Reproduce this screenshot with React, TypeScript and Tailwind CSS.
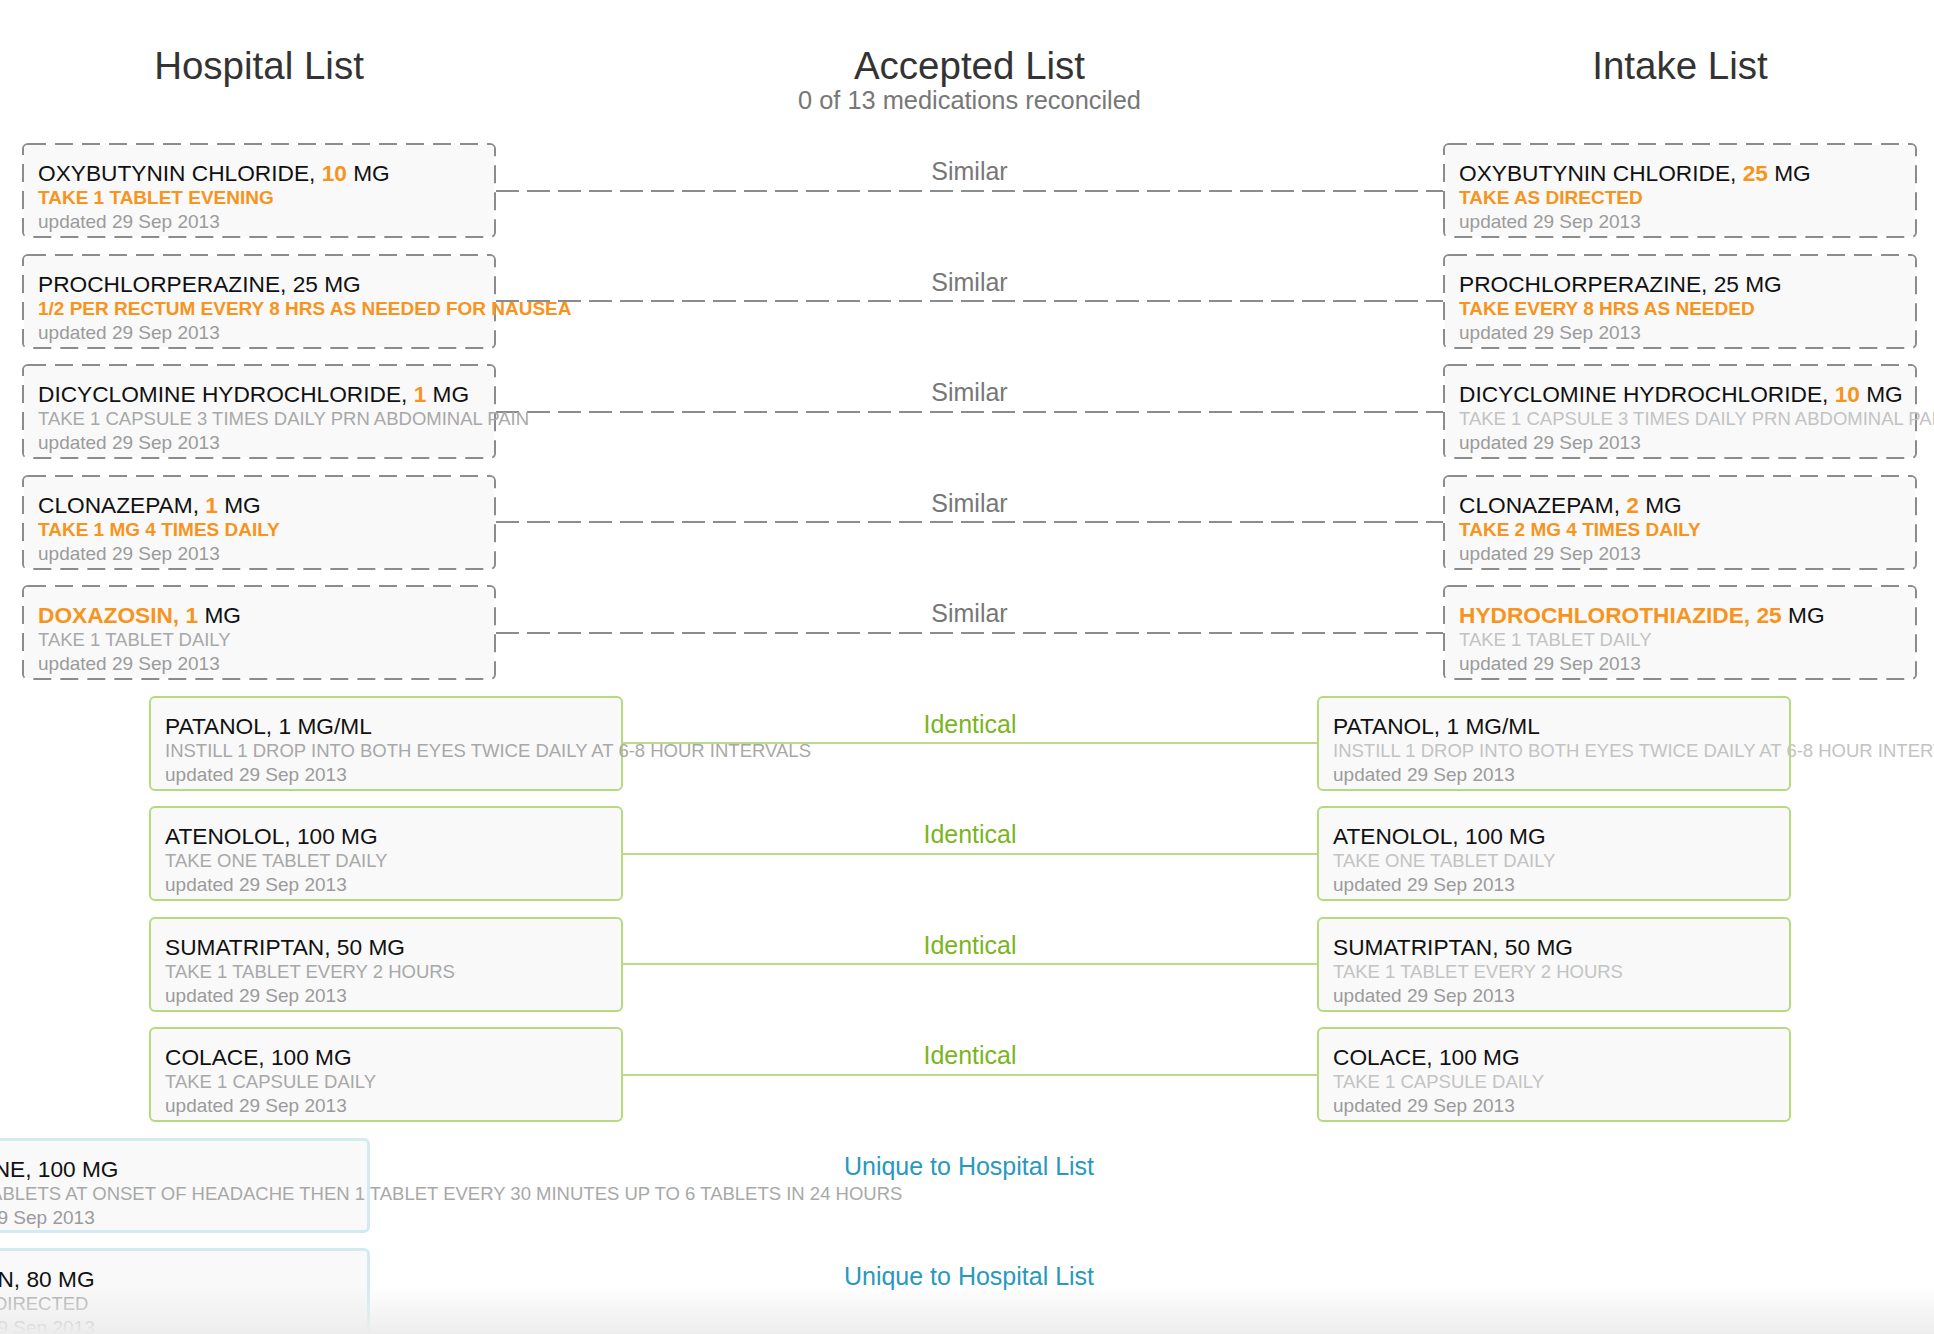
import React from "react";

type Seg = { t: string; hl?: boolean };
type Med = { name: Seg[]; instr: string; instrHl?: boolean };

type Kind = "similar" | "identical" | "unique";

const similarRows: { h: Med; i: Med }[] = [
  {
    h: { name: [{ t: "OXYBUTYNIN CHLORIDE, " }, { t: "10", hl: true }, { t: " MG" }], instr: "TAKE 1 TABLET EVENING", instrHl: true },
    i: { name: [{ t: "OXYBUTYNIN CHLORIDE, " }, { t: "25", hl: true }, { t: " MG" }], instr: "TAKE AS DIRECTED", instrHl: true },
  },
  {
    h: { name: [{ t: "PROCHLORPERAZINE, 25 MG" }], instr: "1/2 PER RECTUM EVERY 8 HRS AS NEEDED FOR NAUSEA", instrHl: true },
    i: { name: [{ t: "PROCHLORPERAZINE, 25 MG" }], instr: "TAKE EVERY 8 HRS AS NEEDED", instrHl: true },
  },
  {
    h: { name: [{ t: "DICYCLOMINE HYDROCHLORIDE, " }, { t: "1", hl: true }, { t: " MG" }], instr: "TAKE 1 CAPSULE 3 TIMES DAILY PRN ABDOMINAL PAIN" },
    i: { name: [{ t: "DICYCLOMINE HYDROCHLORIDE, " }, { t: "10", hl: true }, { t: " MG" }], instr: "TAKE 1 CAPSULE 3 TIMES DAILY PRN ABDOMINAL PAIN" },
  },
  {
    h: { name: [{ t: "CLONAZEPAM, " }, { t: "1", hl: true }, { t: " MG" }], instr: "TAKE 1 MG 4 TIMES DAILY", instrHl: true },
    i: { name: [{ t: "CLONAZEPAM, " }, { t: "2", hl: true }, { t: " MG" }], instr: "TAKE 2 MG 4 TIMES DAILY", instrHl: true },
  },
  {
    h: { name: [{ t: "DOXAZOSIN, 1", hl: true }, { t: " MG" }], instr: "TAKE 1 TABLET DAILY" },
    i: { name: [{ t: "HYDROCHLOROTHIAZIDE, 25", hl: true }, { t: " MG" }], instr: "TAKE 1 TABLET DAILY" },
  },
];

const identicalRows: Med[] = [
  { name: [{ t: "PATANOL, 1 MG/ML" }], instr: "INSTILL 1 DROP INTO BOTH EYES TWICE DAILY AT 6-8 HOUR INTERVALS" },
  { name: [{ t: "ATENOLOL, 100 MG" }], instr: "TAKE ONE TABLET DAILY" },
  { name: [{ t: "SUMATRIPTAN, 50 MG" }], instr: "TAKE 1 TABLET EVERY 2 HOURS" },
  { name: [{ t: "COLACE, 100 MG" }], instr: "TAKE 1 CAPSULE DAILY" },
];

const uniqueRows: Med[] = [
  {
    name: [{ t: "CAFFEINE, 100 MG" }],
    instr: "TAKE 2 TABLETS AT ONSET OF HEADACHE THEN 1 TABLET EVERY 30 MINUTES UP TO 6 TABLETS IN 24 HOURS",
  },
  { name: [{ t: "GEODON, 80 MG" }], instr: "TAKE AS DIRECTED" },
];

function Card({ med, kind, side }: { med: Med; kind: Kind; side: "left" | "right" }) {
  const border =
    kind === "similar"
      ? "border-2 border-transparent bg-clip-padding"
      : kind === "identical"
      ? "border-2 border-[#b7da80]"
      : "border-[3px] border-[#d4eaf1]";
  const instrColor = med.instrHl
    ? "font-bold text-[19px] text-[#f7941e]"
    : side === "left"
    ? "text-[18.5px] text-[#a8a8a8]"
    : "text-[18.5px] text-[#c3c3c3]";
  return (
    <div
      className={`relative shrink-0 w-[474px] h-[95px] rounded-[6px] bg-[#f9f9f9] pl-[14px] pt-[16px] whitespace-nowrap ${border}`}
    >
      {kind === "similar" && (
        <svg
          className="absolute -left-[2px] -top-[2px] -z-10 pointer-events-none"
          width="474"
          height="95"
        >
          <rect
            x="1"
            y="1"
            width="472"
            height="93"
            rx="5"
            fill="none"
            stroke="#8c8c8c"
            strokeWidth="2"
            strokeDasharray="18 9"
          />
        </svg>
      )}
      <div className="text-[22.7px] leading-[25px] text-[#111]">
        {med.name.map((s, k) =>
          s.hl ? (
            <span key={k} className="font-bold text-[#f7941e]">
              {s.t}
            </span>
          ) : (
            <span key={k}>{s.t}</span>
          )
        )}
      </div>
      <div className={`leading-[24px] ${instrColor}`}>{med.instr}</div>
      <div className="text-[19px] leading-[24px] text-[#9b9b9b]">updated 29 Sep 2013</div>
    </div>
  );
}

function Connector({ kind }: { kind: Kind }) {
  if (kind === "similar") {
    return (
      <div className="flex-1 flex flex-col pt-[13px]">
        <div className="text-center text-[25px] leading-[30px] text-[#777777]">Similar</div>
        <div className="mt-[3.5px] h-[2px] bg-[repeating-linear-gradient(90deg,#8c8c8c_0px,#8c8c8c_23px,transparent_23px,transparent_31px)]" />
      </div>
    );
  }
  if (kind === "identical") {
    return (
      <div className="flex-1 flex flex-col pt-[13px]">
        <div className="text-center text-[25px] leading-[30px] text-[#7ab51d]">Identical</div>
        <div className="mt-[3.5px] h-[2px] bg-[#badc88]" />
      </div>
    );
  }
  return (
    <div className="flex-1 flex flex-col pt-[13px]">
      <div className="text-center text-[25px] leading-[30px] text-[#2899bc]">Unique to Hospital List</div>
    </div>
  );
}

export default function App() {
  return (
    <div className="relative isolate h-screen w-full overflow-hidden bg-white font-['Liberation_Sans',Arial,Helvetica,sans-serif]">
      <div className="flex pl-[22px] pr-[17px] pt-[46px]">
        <div className="w-[474px] shrink-0 text-center text-[38.5px] leading-[40px] text-[#333333]">Hospital List</div>
        <div className="flex-1 text-center">
          <div className="text-[38.5px] leading-[40px] text-[#333333]">Accepted List</div>
          <div className="text-[25.4px] leading-[28px] text-[#777777]">0 of 13 medications reconciled</div>
        </div>
        <div className="w-[474px] shrink-0 text-center text-[38.5px] leading-[40px] text-[#333333]">Intake List</div>
      </div>

      <div className="mt-[29px] flex flex-col gap-[15.5px]">
        {similarRows.map((r, k) => (
          <div key={`s${k}`} className="flex pl-[22px] pr-[17px]">
            <Card med={r.h} kind="similar" side="left" />
            <Connector kind="similar" />
            <Card med={r.i} kind="similar" side="right" />
          </div>
        ))}
        {identicalRows.map((m, k) => (
          <div key={`i${k}`} className="flex pl-[149px] pr-[143px]">
            <Card med={m} kind="identical" side="left" />
            <Connector kind="identical" />
            <Card med={m} kind="identical" side="right" />
          </div>
        ))}
        {uniqueRows.map((m, k) => (
          <div key={`u${k}`} className="flex">
            <div className="ml-[-104px] shrink-0">
              <Card med={m} kind="unique" side="left" />
            </div>
            <Connector kind="unique" />
            <div className="w-[474px] shrink-0 mr-[-108px]" />
          </div>
        ))}
      </div>

      <div className="pointer-events-none absolute bottom-0 left-0 right-0 h-[48px] bg-linear-to-b from-white/0 to-[#ededed]" />
    </div>
  );
}
